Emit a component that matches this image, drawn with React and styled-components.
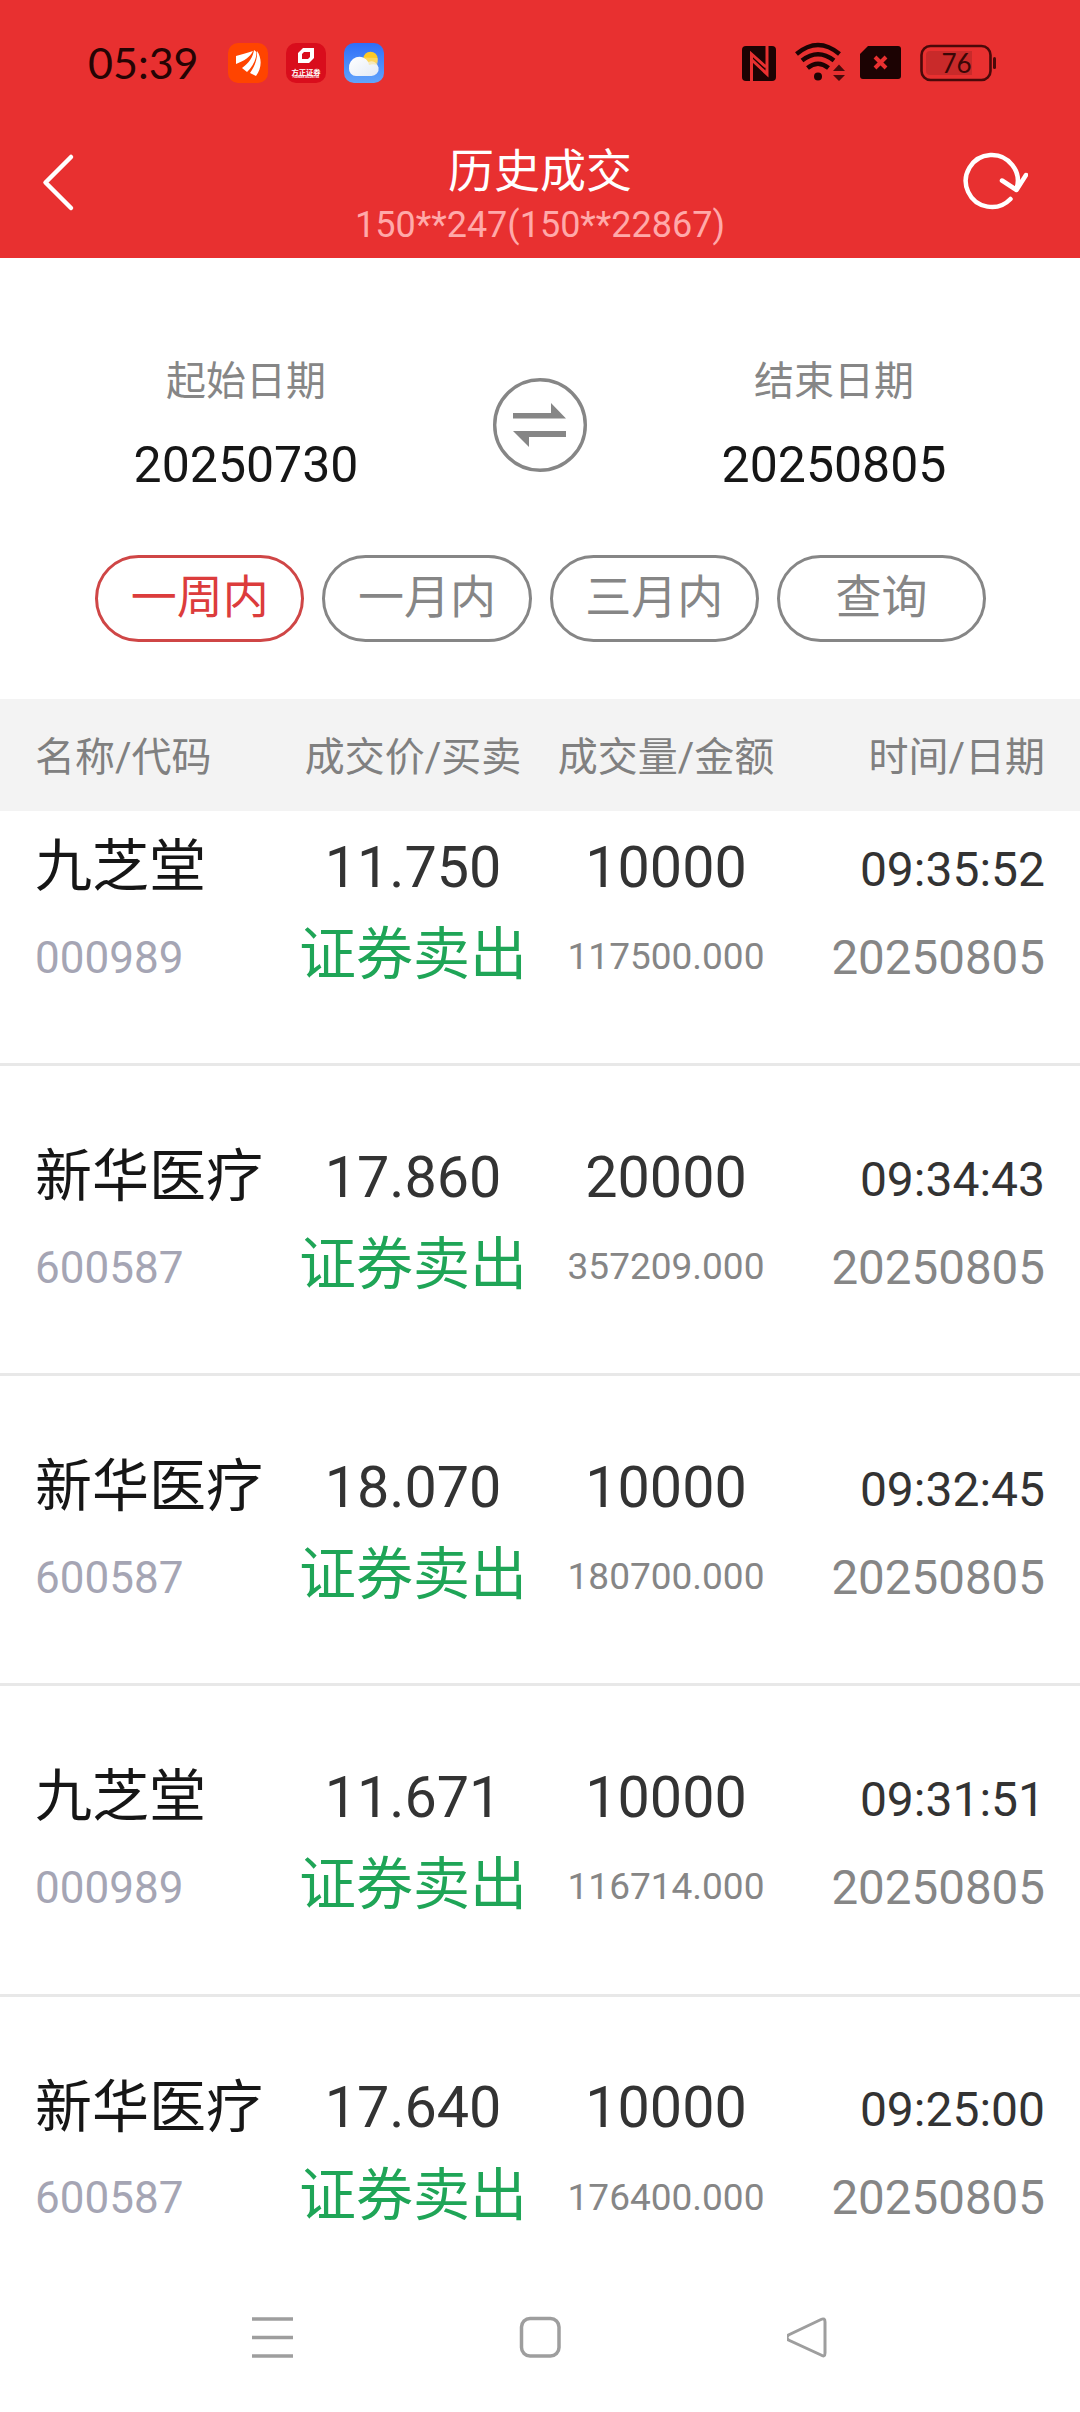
import styled, { createGlobalStyle } from "styled-components";

const GlobalStyle = createGlobalStyle`
    * {
        box-sizing: border-box;
    }

    body {
        margin: 0;
        background-color: #fff;
        font-family: Roboto, "Noto Sans CJK SC", sans-serif;
    }
`;

const StyledApp = styled.div`
    width: 1080px;
    height: 2412px;
    display: flex;
    flex-direction: column;
    overflow: hidden;
    background-color: #fff;
`;

// Status bar
const StatusBar = styled.div`
    height: 126px;
    padding: 0 83px 0 88px;
    display: flex;
    justify-content: space-between;
    align-items: center;
    background-color: #e83030;
`;

const StatusGroup = styled.div`
    display: flex;
    align-items: center;
    gap: ${({ $gap }) => $gap}px;
`;

const Clock = styled.span`
    width: 122px;
    font-family: Lato, sans-serif;
    font-size: 43px;
    line-height: 50px;
    color: #250404;
`;

// Title bar
const Header = styled.header`
    height: 132px;
    padding: 0 52px 0 42px;
    display: flex;
    justify-content: space-between;
    background-color: #e83030;
`;

const HeaderButton = styled.button`
    width: 66px;
    height: 66px;
    margin-top: 24px;
    padding: 0;
    border: none;
    background: none;
`;

const HeaderTitle = styled.div`
    padding: 18px 0 0 10px;
    display: flex;
    flex-direction: column;
    align-items: center;
    color: #fff;

    h1 {
        margin: 0;
        font-size: 46px;
        font-weight: 400;
        line-height: 54px;
    }

    span {
        margin-top: 5px;
        font-size: 36px;
        line-height: 44px;
        color: #ffa9a9;
    }
`;

// Date range
const DateRange = styled.section`
    height: 297px;
    padding: 96px 91px 0;
    display: flex;
    justify-content: space-between;
`;

const DateField = styled.div`
    width: 310px;
    display: flex;
    flex-direction: column;
    align-items: center;

    label {
        font-size: 40px;
        line-height: 56px;
        color: #868686;
    }

    span {
        margin-top: 26px;
        font-size: 50px;
        line-height: 58px;
        color: #161616;
    }
`;

const SwapIcon = styled.svg`
    margin-top: 24px;
    width: 94px;
    height: 94px;
`;

const FilterBar = styled.div`
    height: 144px;
    padding: 0 94px 0 95px;
    display: flex;
    gap: 18px;
`;

const FilterButton = styled.button`
    flex: 1;
    height: 87px;
    padding: 0 0 3px;
    border: 3px solid ${({ $active }) => ($active ? "#cf4646" : "#868686")};
    border-radius: 44px;
    background: none;
    font-family: inherit;
    font-size: 46px;
    line-height: 60px;
    color: ${({ $active }) => ($active ? "#dc3c3c" : "#868686")};
`;

// Table
const TableHead = styled.div`
    height: 112px;
    padding: 0 35px 2px;
    display: grid;
    grid-template-columns: 252px 252px 254px 1fr;
    align-items: center;
    background-color: #f3f3f3;
    font-size: 40px;
    color: #808080;
`;

const HeadCell = styled.span`
    white-space: nowrap;
    text-align: ${({ $align }) => $align};
`;

const TradeList = styled.ul`
    flex: 1;
    margin: 0;
    padding: 0;
    list-style: none;
    overflow: hidden;
`;

const TradeRow = styled.li`
    height: 310.2px;
    padding: 71px 35px 0;
    display: grid;
    grid-template-columns: 252px 252px 254px 1fr;
    grid-template-rows: 80px 96px;
    align-items: center;
    border-bottom: 3px solid #e8e8e8;
    white-space: nowrap;

    &:first-child {
        height: 255px;
        padding-top: 16px;
    }

    &:last-child {
        border-bottom: none;
    }
`;

const StockName = styled.span`
    font-size: 57px;
    line-height: 80px;
    color: #161616;
`;

const StockCode = styled.span`
    padding-top: 5px;
    font-size: 44px;
    color: #a5a5b4;
`;

const Price = styled.span`
    font-size: 57.5px;
    text-align: center;
    color: #333;
`;

const Side = styled.span`
    font-size: 57px;
    line-height: 80px;
    text-align: center;
    color: #1fa557;
`;

const Amount = styled.span`
    padding-top: 3px;
    font-size: 37px;
    text-align: center;
    color: #868686;
`;

const Time = styled.span`
    padding-top: 4px;
    font-size: 48px;
    text-align: right;
    color: #333;
`;

const TradeDate = styled.span`
    padding-top: 5px;
    font-size: 47.5px;
    text-align: right;
    color: #868686;
`;

const NavBar = styled.nav`
    height: 150px;
    padding: 54px 251px 0;
    display: flex;
    justify-content: space-between;
    align-items: flex-start;
`;

const filters = ["一周内", "一月内", "三月内", "查询"];

const trades = [
    { name: "九芝堂", code: "000989", price: "11.750", volume: "10000", amount: "117500.000", time: "09:35:52" },
    { name: "新华医疗", code: "600587", price: "17.860", volume: "20000", amount: "357209.000", time: "09:34:43" },
    { name: "新华医疗", code: "600587", price: "18.070", volume: "10000", amount: "180700.000", time: "09:32:45" },
    { name: "九芝堂", code: "000989", price: "11.671", volume: "10000", amount: "116714.000", time: "09:31:51" },
    { name: "新华医疗", code: "600587", price: "17.640", volume: "10000", amount: "176400.000", time: "09:25:00" },
];

function AppIcons() {
    return <StatusGroup $gap={18}>
        {/* Eastmoney */}
        <svg width="40" height="40" viewBox="0 0 40 40">
            <rect width="40" height="40" rx="10" fill="#ff4400"/>
            <path d="M8 13C14 11 20 10 25 8C22 14 16 18 8 21Z" fill="#fff"/>
            <path d="M14 25C21 20 25 14 26 7L28.500 9C28.500 17 24 24 19 29Z" fill="#fff"/>
            <path d="M22 30C27 23 29.500 16 29 8C34 15 34 25 28 33Z" fill="#fff"/>
        </svg>
        {/* Founder Securities */}
        <svg width="40" height="40" viewBox="0 0 40 40">
            <rect width="40" height="40" rx="10" fill="#d90d1c"/>
            <path fillRule="evenodd" d="M17 5H28V15L23 20H12V10ZM18 9L16 11V16H22L24 14V9Z" fill="#fff"/>
            <text x="20" y="31.500" fontSize="7.300" fontWeight="700" textAnchor="middle" fill="#fff">方正证券</text>
            <text x="20" y="35" fontSize="2.600" fontWeight="700" textAnchor="middle" fill="#fff">FOUNDER SECURITIES</text>
        </svg>
        {/* Weather */}
        <svg width="40" height="40" viewBox="0 0 40 40">
            <defs>
                <linearGradient id="sky" x1="0" y1="0" x2="0" y2="1">
                    <stop offset="0" stopColor="#2f6ef8"/>
                    <stop offset="1" stopColor="#62a4fb"/>
                </linearGradient>
                <linearGradient id="cloud" x1="0" y1="0" x2="1" y2="1">
                    <stop offset="0" stopColor="#fff"/>
                    <stop offset="1" stopColor="#e3eaf5"/>
                </linearGradient>
            </defs>
            <rect width="40" height="40" rx="10" fill="url(#sky)"/>
            <circle cx="26.500" cy="16" r="7.300" fill="#fdc926"/>
            <path d="M12 33A7 7 0 0 1 5 25.500A10.500 10.500 0 0 1 24.500 19A7.300 7.300 0 1 1 27 33Z" fill="url(#cloud)"/>
            <path d="M20 14.500Q24 17 25 22Q29 20.500 33 22Q34.500 19 33.500 15Z" fill="#fbe08a" opacity=".55"/>
        </svg>
    </StatusGroup>;
}

function SystemIcons() {
    return <svg width="256" height="44" viewBox="742 40 256 44">
        {/* NFC */}
        <rect x="743" y="45" width="34" height="35" rx="4" fill="#1c0303"/>
        <path d="M752.500 80V53L767 66M768 45V73L753 59" fill="none" stroke="#e83030" strokeWidth="3"/>
        {/* Wi-Fi */}
        <g fill="none" stroke="#1c0303" strokeWidth="4.500">
            <path d="M797.500 53Q819 35 840.500 53"/>
            <path d="M803 59.500Q819 47 835 59.500"/>
            <path d="M808.500 67Q819 58.500 829.500 67"/>
        </g>
        <circle cx="819" cy="75.500" r="4" fill="#1c0303"/>
        <path d="M834 70L840 63.500L846 70ZM834 74L840 80L846 74Z" fill="#4a0b0b"/>
        {/* SIM */}
        <path d="M869 45H899Q902 45 902 48V75Q902 78 899 78H864Q861 78 861 75V53Z" fill="#1c0303"/>
        <path d="M876 56L887 67M887 56L876 67" stroke="#e83030" strokeWidth="4"/>
        {/* Battery */}
        <rect x="922.500" y="45" width="69" height="34" rx="9" fill="none" stroke="#4a0909" strokeWidth="2.600"/>
        <path d="M931 50H973V74H931Q927 74 927 70V54Q927 50 931 50Z" fill="#c92a2a"/>
        <rect x="994" y="56" width="3" height="12" rx="1.500" fill="#4a0909"/>
        <text x="957.500" y="72" textAnchor="middle" fontFamily="Lato, sans-serif" fontSize="26" fill="#3a0707">76</text>
    </svg>;
}

function App() {
    return <StyledApp>
        <GlobalStyle/>
        <StatusBar>
            <StatusGroup $gap={18}>
                <Clock>05:39</Clock>
                <AppIcons/>
            </StatusGroup>
            <SystemIcons/>
        </StatusBar>

        <Header>
            <HeaderButton aria-label="back">
                <svg width="66" height="66" viewBox="42 150 66 66">
                    <path d="M71 157L45.500 182.500L71 208" fill="none" stroke="#fff" strokeWidth="4.500" strokeLinecap="round" strokeLinejoin="round"/>
                </svg>
            </HeaderButton>
            <HeaderTitle>
                <h1>历史成交</h1>
                <span>150**247(150**22867)</span>
            </HeaderTitle>
            <HeaderButton aria-label="refresh">
                <svg width="66" height="66" viewBox="962 150 66 66">
                    <path d="M1010.500 199A26 26 0 1 1 1016.500 189M1002 180.500L1016.500 190L1026 175" fill="none" stroke="#fff" strokeWidth="4.500" strokeLinecap="round" strokeLinejoin="round"/>
                </svg>
            </HeaderButton>
        </Header>

        <DateRange>
            <DateField>
                <label>起始日期</label>
                <span>20250730</span>
            </DateField>
            <SwapIcon viewBox="0 0 94 94">
                <circle cx="47" cy="47" r="45.300" fill="none" stroke="#868686" strokeWidth="3.400"/>
                <path d="M20 35H58V25L73 40.500H20ZM73 59H36V69L20 53H73Z" fill="#868686"/>
            </SwapIcon>
            <DateField>
                <label>结束日期</label>
                <span>20250805</span>
            </DateField>
        </DateRange>

        <FilterBar>
            {filters.map((filter, i) => <FilterButton key={filter} $active={i === 0}>{filter}</FilterButton>)}
        </FilterBar>

        <TableHead>
            <HeadCell>名称/代码</HeadCell>
            <HeadCell $align="center">成交价/买卖</HeadCell>
            <HeadCell $align="center">成交量/金额</HeadCell>
            <HeadCell $align="right">时间/日期</HeadCell>
        </TableHead>

        <TradeList>
            {trades.map((trade) => <TradeRow key={trade.time}>
                <StockName>{trade.name}</StockName>
                <Price>{trade.price}</Price>
                <Price>{trade.volume}</Price>
                <Time>{trade.time}</Time>
                <StockCode>{trade.code}</StockCode>
                <Side>证券卖出</Side>
                <Amount>{trade.amount}</Amount>
                <TradeDate>20250805</TradeDate>
            </TradeRow>)}
        </TradeList>

        <NavBar>
            <svg width="42" height="42" viewBox="0 0 42 42">
                <path d="M1 3H42M1 21.500H42M1 40H42" stroke="#9e9e9e" strokeWidth="3.600"/>
            </svg>
            <svg width="42" height="42" viewBox="0 0 42 42">
                <rect x="2.500" y="2.500" width="37.500" height="37.500" rx="8.500" fill="none" stroke="#9e9e9e" strokeWidth="3.500"/>
            </svg>
            <svg width="42" height="42" viewBox="0 0 42 42">
                <path d="M34 3.500Q38 1.500 38 6V37Q38 41.500 34 39L1.500 24Q-1.500 21.500 1.500 19Z" fill="none" stroke="#9e9e9e" strokeWidth="3"/>
            </svg>
        </NavBar>
    </StyledApp>;
}

export default App;
